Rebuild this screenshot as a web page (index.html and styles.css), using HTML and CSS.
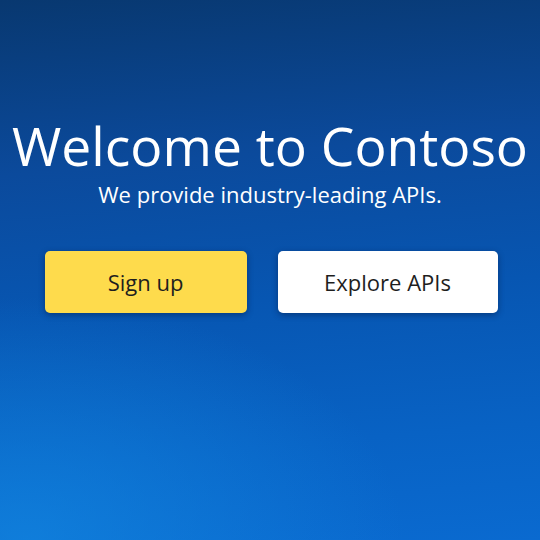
FILE: index.html
```html
<!DOCTYPE html>
<html lang="en">
<head>
<meta charset="utf-8">
<title>Contoso</title>
<link rel="stylesheet" href="styles.css">
</head>
<body>
<main class="hero">
  <h1 class="title">Welcome to Contoso</h1>
  <p class="subtitle">We provide industry-leading APIs.</p>
  <div class="actions">
    <a class="btn btn-primary" href="#">Sign up</a>
    <a class="btn btn-secondary" href="#">Explore APIs</a>
  </div>
</main>
</body>
</html>
```
FILE: styles.css
```css
html, body {
  margin: 0;
  padding: 0;
  height: 100%;
}
body {
  font-family: "Open Sans", "Noto Sans", sans-serif;
  background:
    radial-gradient(ellipse 70% 45% at 5% 100%, rgba(18, 135, 225, 0.7), rgba(18, 135, 225, 0) 100%),
    linear-gradient(175deg, #083870 0%, #0b4a9c 30%, #0756b2 55%, #0862c4 80%, #0a6ad0 100%);
  overflow: hidden;
}
.hero {
  display: flex;
  flex-direction: column;
  align-items: center;
  padding-top: 113px;
  color: #ffffff;
  text-align: center;
}
.title {
  margin: 0;
  font-size: 53.4px;
  line-height: 66px;
  font-weight: 400;
}
.subtitle {
  margin: 2px 0 0;
  font-size: 22px;
  line-height: 26px;
}
.actions {
  display: flex;
  justify-content: center;
  gap: 31px;
  margin-top: 44px;
  padding-left: 2px;
}
.btn {
  display: flex;
  align-items: center;
  justify-content: center;
  height: 62px;
  border-radius: 5px;
  font-size: 22px;
  text-decoration: none;
  color: #1e1e1e;
  box-shadow: 0 2px 6px rgba(0, 20, 60, 0.45);
}
.btn-primary {
  width: 202px;
  background: #fedb4c;
}
.btn-secondary {
  width: 220px;
  background: #ffffff;
}
```
